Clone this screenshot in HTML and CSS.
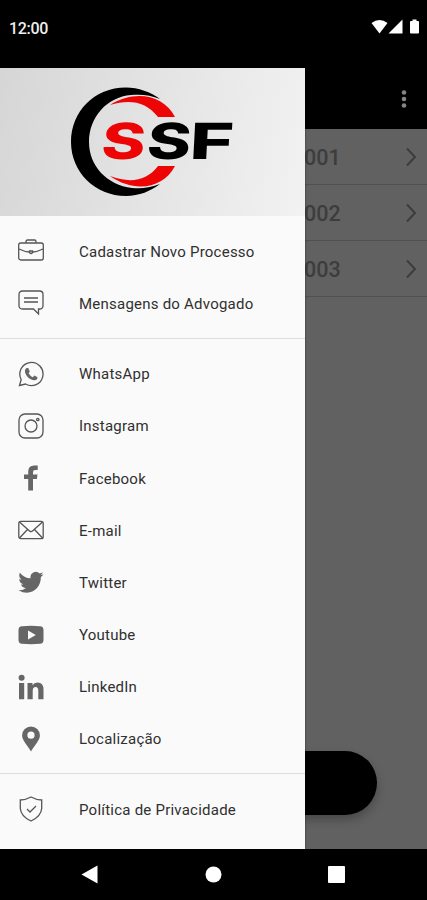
FILE: index.html
```html
<!DOCTYPE html>
<html lang="pt-BR">
<head>
  <meta charset="UTF-8" />
  <meta name="viewport" content="width=device-width, initial-scale=1" />
  <title>SSF - Menu</title>
  <link rel="stylesheet" href="styles.css">
</head>
<body>

  <header class="status-bar">
    <span class="clock">12:00</span>
    <svg class="status-icons" width="50" height="16" viewBox="0 0 50 16" fill="#fff">
      <path d="M0.500 4Q8.500 -2 16.500 4L8.500 14.500Z"/>
      <path d="M17.500 14.500L31.500 0.500V14.500Z"/>
      <path d="M41.500 0.500h4v1.500h1.500q1 0 1 1v10.500q0 1-1 1h-7q-1 0-1-1V3q0-1 1-1h1.500z"/>
    </svg>
  </header>

  <div class="screen">
    <main class="content">
      <div class="app-bar">
        <svg width="6" height="20" viewBox="0 0 6 20" fill="#858585">
          <circle cx="3" cy="3.500" r="2.300"/><circle cx="3" cy="10" r="2.300"/><circle cx="3" cy="16.500" r="2.300"/>
        </svg>
      </div>
      <ul class="process-list">
        <li><span>001</span><svg class="chevron" viewBox="0 0 12 20"><path d="M2 1.500L10 10L2 18.500"/></svg></li>
        <li><span>002</span><svg class="chevron" viewBox="0 0 12 20"><path d="M2 1.500L10 10L2 18.500"/></svg></li>
        <li><span>003</span><svg class="chevron" viewBox="0 0 12 20"><path d="M2 1.500L10 10L2 18.500"/></svg></li>
      </ul>
      <button class="btn-main" type="button" aria-label="Adicionar"></button>
    </main>

    <aside class="drawer">
      <div class="drawer-header">
        <svg class="logo" width="166" height="112" viewBox="0 0 166 112">
          <path fill="#000" d="M91 13C82 6 69 1.500 57 1.500C25 1.500 2 26 2 56C2 86 26 110 57 110C70 110 82 105 91 98C80 102 72 103 63 102C38 99 20 80 20 56C20 31 38 11 62 9C72 8 82 9 91 13Z"/>
          <path fill="#ed0505" d="M41 19C65 4 94 8 106 31H89C77 15 60 13 41 19Z"/>
          <path fill="#ed0505" d="M41 90C65 107 94 103 106 80H89C77 96 60 97 41 90Z"/>
          <text class="logo-text" transform="translate(31 73) skewX(-6)" textLength="44" lengthAdjust="spacingAndGlyphs" fill="#ed0505">S</text>
          <text class="logo-text" transform="translate(76.500 73) skewX(-6)" textLength="44" lengthAdjust="spacingAndGlyphs">S</text>
          <text class="logo-text" transform="translate(120 73) skewX(-3)" textLength="44" lengthAdjust="spacingAndGlyphs">F</text>
        </svg>
      </div>

      <nav>
        <ul class="menu-group">
          <li class="menu-item">
            <svg class="icon line" viewBox="0 0 26 26"><rect x=".7" y="5" width="24.600" height="17" rx="2"/><path d="M8 5V3.500Q8 2 9.500 2h7Q18 2 18 3.500V5M1 11Q7 13.800 11 14M15 14Q19 13.800 25 11M11.500 13h3v1.500q-1.500 2-3 0z"/></svg>
            <span>Cadastrar Novo Processo</span>
          </li>
          <li class="menu-item">
            <svg class="icon line" viewBox="0 0 26 26"><path d="M4.500 1H21.500Q25 1 25 4.500V15.500Q25 19 21.500 19H20.500V24L15.500 19H4.500Q1 19 1 15.500V4.500Q1 1 4.500 1ZM6 8H20M6 12H20"/></svg>
            <span>Mensagens do Advogado</span>
          </li>
        </ul>

        <ul class="menu-group">
          <li class="menu-item">
            <svg class="icon line" viewBox="0 0 26 26"><path d="M1.500 24.500L3.200 18.500A11.600 11.600 0 1 1 7.500 23Z"/><path class="solid" d="M8.500 7h1.700l1.600 3.500-1.200 1.700q1.500 2.800 4.200 4l1.600-1.600 3.100 1.700q.1 2.800-3.300 3C11.700 19 7 14.500 6.900 10Q7 8 8.500 7Z"/></svg>
            <span>WhatsApp</span>
          </li>
          <li class="menu-item">
            <svg class="icon line" viewBox="0 0 26 26"><rect x="1" y="1" width="24" height="24" rx="6"/><circle cx="13" cy="13" r="6"/><circle cx="19.800" cy="6.500" r="1.200"/></svg>
            <span>Instagram</span>
          </li>
          <li class="menu-item">
            <svg class="icon solid" viewBox="0 0 26 26"><path d="M10.200 25.500V14H6V9.500h4.200V6.500Q10.200.5 16.200.5h3.500V5h-2.500q-2.200 0-2.200 2v2.500h4.500L18.900 14H15v11.500z"/></svg>
            <span>Facebook</span>
          </li>
          <li class="menu-item">
            <svg class="icon line" viewBox="0 0 26 26"><rect x=".8" y="4.300" width="24.400" height="17.400" rx="2"/><path d="M1.500 5L11.500 14Q13 15.300 14.500 14L24.500 5M1.500 21L9.500 12.500M24.500 21L16.500 12.500"/></svg>
            <span>E-mail</span>
          </li>
          <li class="menu-item">
            <svg class="icon solid" viewBox="0 0 26 26"><path d="M25.500 5.200q-1.300.7-2.700.8 1.500-1 2-2.700-1.500.8-3.200 1.200a5.300 5.300 0 0 0-9 4.800Q6 9 1.900 3.700c-1.300 2.400-.6 5.300 1.600 7q-1.200 0-2.300-.7c0 2.600 1.700 4.800 4.100 5.300q-1.100.3-2.300.1c.7 2.100 2.600 3.600 4.900 3.600Q4.600 21.800.4 21.200C12 28 23 20 22.900 7.900q1.600-1.100 2.600-2.700z"/></svg>
            <span>Twitter</span>
          </li>
          <li class="menu-item">
            <svg class="icon solid" viewBox="0 0 26 26"><path fill-rule="evenodd" d="M4 4.200Q13 3.500 22 4.200 25.500 4.500 25.500 8v10q0 3.500-3.500 3.800-9 .7-18 0Q.5 21.500.5 18V8Q.5 4.500 4 4.200ZM10 8.500v9L17.800 13z"/></svg>
            <span>Youtube</span>
          </li>
          <li class="menu-item">
            <svg class="icon solid" viewBox="0 0 26 26"><circle cx="3.600" cy="3.800" r="3"/><path d="M1 9h5.200v16.200H1zM9.500 9h5v2.200Q16 8.600 19.500 8.600q6 0 6 7.200v9.400h-5.200v-8.300q0-3.900-2.700-3.900-2.900 0-2.900 3.900v8.300H9.500z"/></svg>
            <span>LinkedIn</span>
          </li>
          <li class="menu-item">
            <svg class="icon solid" viewBox="0 0 26 26"><path fill-rule="evenodd" d="M13 .5A8.900 8.900 0 0 0 4.100 9.400C4.100 14 9 18.500 13 25.500 17 18.500 21.900 14 21.900 9.400A8.900 8.900 0 0 0 13 .5ZM13 5.600a3.600 3.600 0 1 1 0 7.200 3.600 3.600 0 0 1 0-7.200Z"/></svg>
            <span>Localização</span>
          </li>
        </ul>

        <ul class="menu-group">
          <li class="menu-item">
            <svg class="icon line" viewBox="0 0 26 26"><path d="M13 1Q7.500 4 2.300 4V12.500Q3 20.500 13 25 23 20.500 23.700 12.500V4Q18.500 4 13 1ZM9 13l3 3 6-6"/></svg>
            <span>Política de Privacidade</span>
          </li>
        </ul>
      </nav>
    </aside>
  </div>

  <footer class="nav-bar">
    <svg width="17" height="19" viewBox="0 0 17 19"><path d="M.5 9.500L16.500.5V18.500Z"/></svg>
    <svg width="17" height="17" viewBox="0 0 17 17"><circle cx="8.500" cy="8.500" r="8"/></svg>
    <svg width="17" height="17" viewBox="0 0 17 17"><rect width="17" height="17" rx="1"/></svg>
  </footer>

</body>
</html>
```
FILE: styles.css
```css
* {
  box-sizing: border-box;
}
body {
  margin: 0;
  height: 900px;
  display: flex;
  flex-direction: column;
  overflow: hidden;
  background: #000;
  font-family: Roboto, sans-serif;
}
ul {
  list-style: none;
  margin: 0;
  padding: 0;
}

/* Status bar */
.status-bar {
  height: 68px;
  padding: 19px 6px 0 9px;
  display: flex;
  justify-content: space-between;
  align-items: flex-start;
  color: #eee;
}
.clock {
  font-size: 16px;
  font-weight: 500;
  line-height: 19px;
  letter-spacing: -0.3px;
}

/* Content behind the drawer */
.screen {
  position: relative;
  height: 781px;
}
.content {
  height: 100%;
  display: flex;
  flex-direction: column;
  background: #616161;
}
.app-bar {
  height: 61px;
  padding-right: 20px;
  display: flex;
  justify-content: flex-end;
  align-items: center;
  background: #000;
}
.process-list li {
  height: 56px;
  padding: 0 10px 0 304px;
  display: flex;
  justify-content: space-between;
  align-items: center;
  border-bottom: 1px solid #505050;
  color: #3d3d3d;
  font-size: 21.5px;
  font-weight: 500;
}
.process-list span {
  padding-top: 2px;
}
.chevron {
  width: 12px;
  height: 20px;
  fill: none;
  stroke: #3d3d3d;
  stroke-width: 2;
}
.btn-main {
  height: 64px;
  margin: auto 50px 34px;
  border: none;
  border-radius: 32px;
  background: #000;
  box-shadow: 0 5px 10px rgba(0,0,0,0.25);
}

/* Drawer */
.drawer {
  position: absolute;
  top: 0;
  left: 0;
  width: 305px;
  height: 100%;
  background: #fafafa;
  box-shadow: 0 0 2px rgba(0,0,0,0.5);
}
.drawer-header {
  height: 148px;
  padding: 18px 0 0 69px;
  background: linear-gradient(100deg, #d6d6d6, #f2f2f2);
}
.logo {
  display: block;
}
.logo-text {
  font-family: Inter, sans-serif;
  font-size: 50px;
  font-weight: 800;
}
.menu-group {
  padding: 9px 0 8.5px;
}
.menu-group + .menu-group {
  border-top: 1px solid #dcdcdc;
}
.menu-item {
  height: 52.15px;
  padding-left: 18px;
  display: flex;
  align-items: center;
  gap: 35px;
  color: #303030;
  font-size: 15px;
  font-weight: 400;
  letter-spacing: 0.23px;
}
.menu-item span {
  padding-top: 1px;
}
.icon {
  width: 26px;
  height: 26px;
  flex: none;
}
.line {
  fill: none;
  stroke: #555;
  stroke-width: 1.3;
}
.solid {
  fill: #666;
  stroke: none;
}

/* System navigation */
.nav-bar {
  height: 51px;
  padding: 0 82px 0 81px;
  display: flex;
  justify-content: space-between;
  align-items: center;
  fill: #fff;
}
```
